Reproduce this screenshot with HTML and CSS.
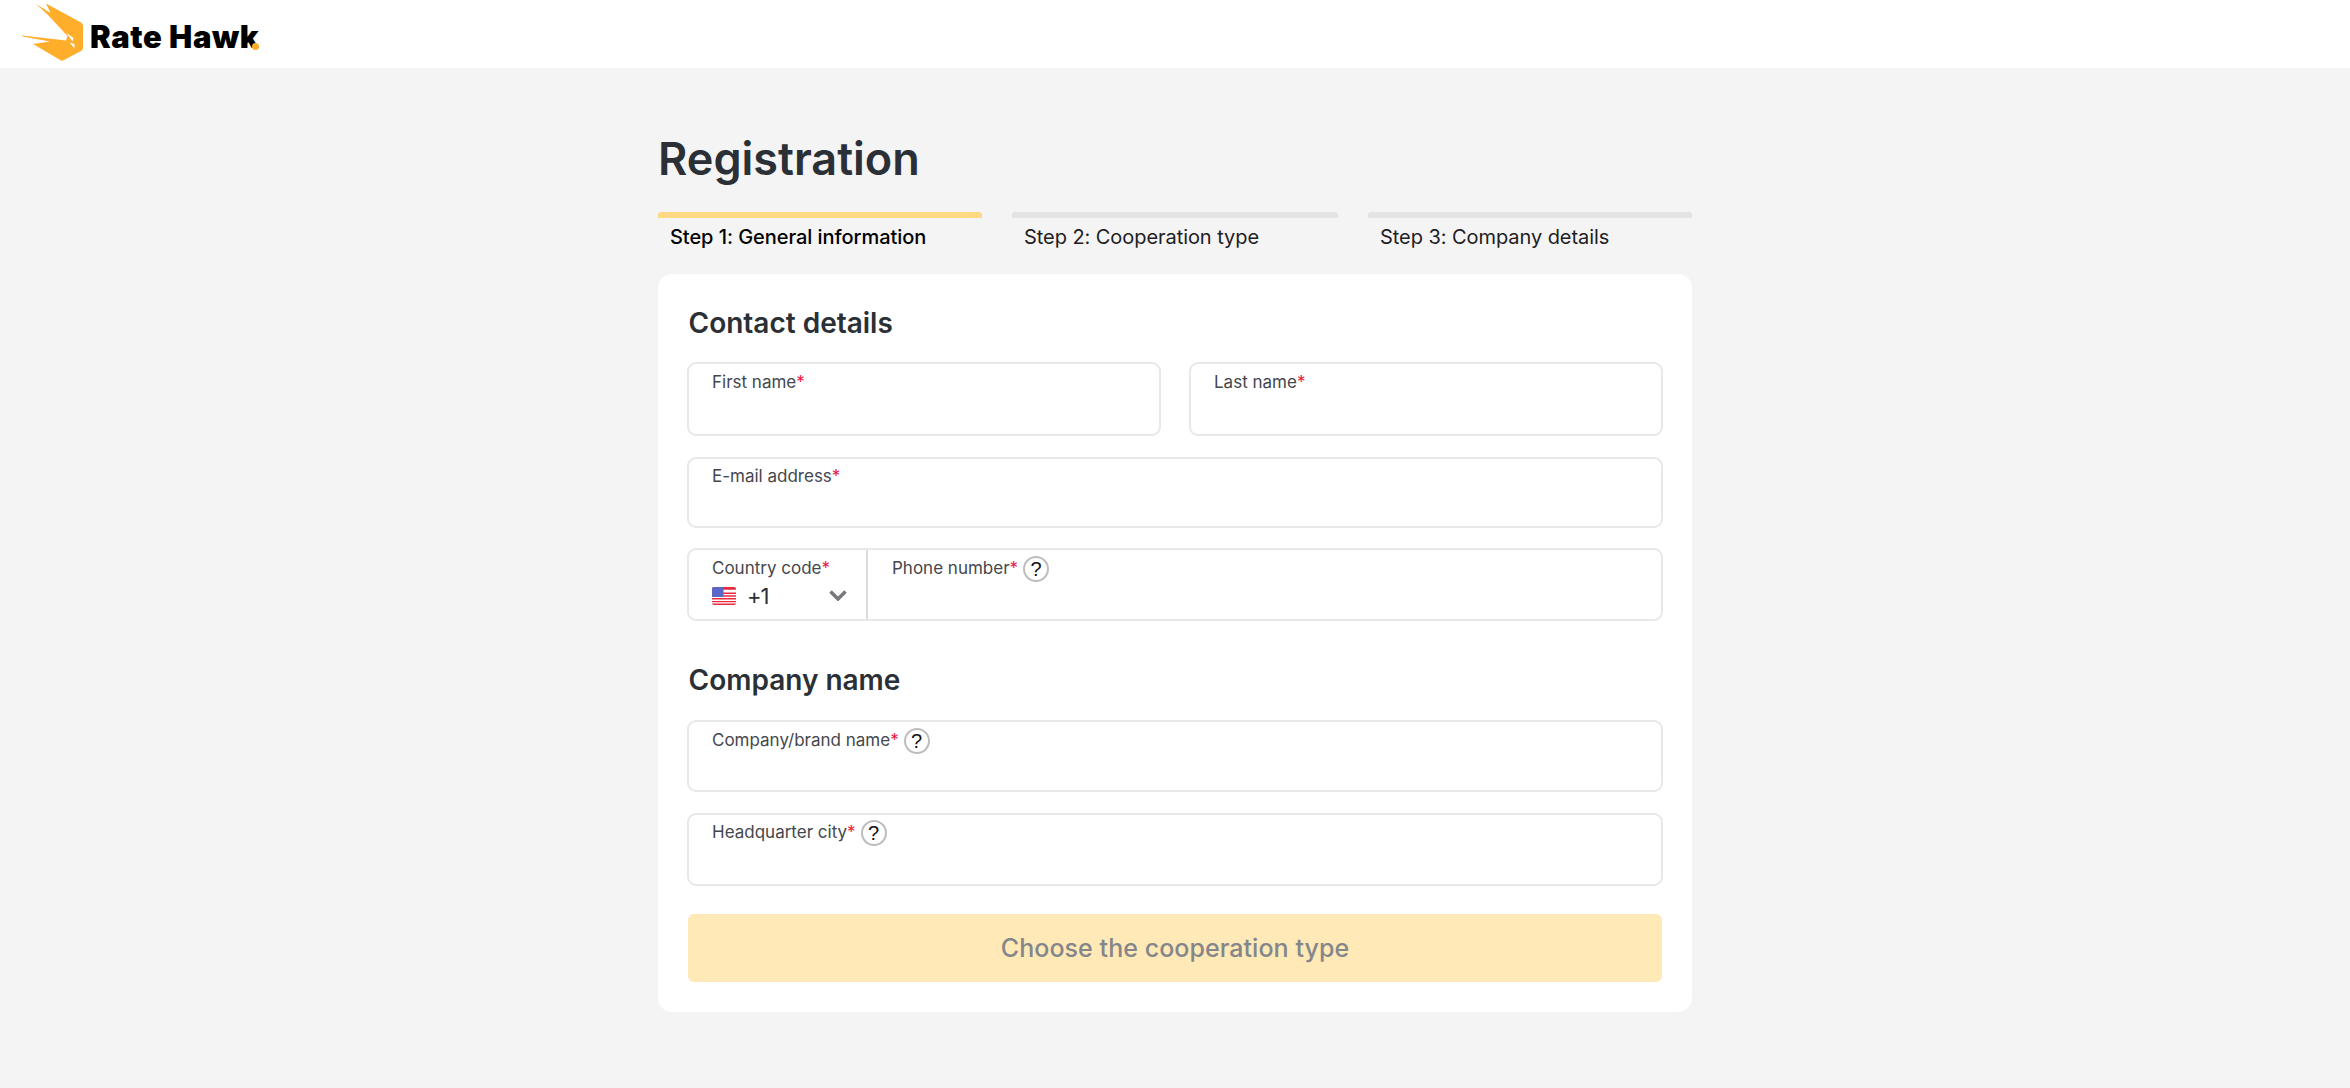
FILE: index.html
```html
<!DOCTYPE html>
<html lang="en">
<head>
<meta charset="utf-8">
<title>Registration</title>
<link rel="stylesheet" href="styles.css">
</head>
<body>
<header class="topbar">
  <a class="logo" href="#">
    <svg class="logo-mark" viewBox="0 0 70 66" width="70" height="66" aria-hidden="true">
      <path fill="#ffae2b" d="M16 4L30.500 13L26 3.500L61 22.500Q63 23.500 63 26V48Q63 50 61 51L43 60.500Q42 61 41 60.500L13 44L30 41.500L2.500 36.500L2.500 35.500L46 40.500L47.500 36L28 15Z"/>
      <path fill="#fff" d="M46.500 33L53.500 38L52.500 41.500ZM49.500 42.500L54.500 44L54.500 48.500Z"/>
    </svg>
    <span class="logo-text">Rate Hawk</span><span class="logo-dot"></span>
  </a>
</header>
<main class="page">
  <h1 class="title">Registration</h1>
  <ol class="steps">
    <li class="step step-active"><span class="step-name">Step 1: General information</span></li>
    <li class="step"><span class="step-name">Step 2: Cooperation type</span></li>
    <li class="step"><span class="step-name">Step 3: Company details</span></li>
  </ol>
  <form class="card">
    <h2 class="section-title">Contact details</h2>
    <div class="row row-two">
      <div class="field field-name"><span class="label">First name<b class="req">*</b></span></div>
      <div class="field field-name"><span class="label">Last name<b class="req">*</b></span></div>
    </div>
    <div class="field field-email"><span class="label">E-mail address<b class="req">*</b></span></div>
    <div class="field phone">
      <div class="code">
        <span class="label">Country code<b class="req">*</b></span>
        <div class="code-value">
          <svg class="flag" viewBox="0 0 24 18" width="24" height="18" aria-hidden="true">
            <rect width="24" height="18" rx="2" fill="#fff"/>
            <path fill="#e8293f" d="M0 2a2 2 0 0 1 2-2h20a2 2 0 0 1 2 2v.8H0zM0 5.500h24v1.400H0zM0 8.300h24v1.400H0zM0 11.100h24v1.400H0zM0 13.900h24v1.400H0zM0 16.600h24a2 2 0 0 1-2 1.400H2a2 2 0 0 1-2-1.400z"/>
            <path fill="#5a67c8" d="M0 2a2 2 0 0 1 2-2h9.500v10H0z"/>
          </svg>
          <span class="code-num">+1</span>
          <svg class="chev" viewBox="0 0 18 11" width="18" height="11" aria-hidden="true"><path d="M1.500 1.500L9 9l7.500-7.500" fill="none" stroke="#77787c" stroke-width="3.500"/></svg>
        </div>
      </div>
      <div class="number"><span class="label">Phone number<b class="req">*</b><i class="help">?</i></span></div>
    </div>
    <h2 class="section-title section-second">Company name</h2>
    <div class="field field-company"><span class="label">Company/brand name<b class="req">*</b><i class="help">?</i></span></div>
    <div class="field field-city"><span class="label">Headquarter city<b class="req">*</b><i class="help">?</i></span></div>
    <button class="submit" type="button" disabled>Choose the cooperation type</button>
  </form>
</main>
</body>
</html>
```
FILE: styles.css
```css
* { box-sizing: border-box; }
html, body { margin: 0; padding: 0; }
body { background: #f4f4f4; font-family: "Inter", "Liberation Sans", sans-serif; color: #2b2f36; height: 1088px; overflow: hidden; }
.topbar { height: 68px; background: #fff; }
.logo { display: flex; align-items: flex-start; height: 66px; padding-left: 20px; color: #000; text-decoration: none; }
.logo-mark { display: block; flex: none; }
.logo-text { font-family: "Inter", sans-serif; font-weight: 900; font-size: 31px; line-height: 36px; margin-top: 19px; letter-spacing: 0.6px; white-space: nowrap; }
.logo-dot { flex: none; width: 7px; height: 7px; border-radius: 50%; background: #ffae2b; margin-top: 43px; margin-left: -7px; }
.page { width: 1034px; margin: 0 auto; }
.title { margin: 0; padding-top: 63px; font-size: 45px; line-height: 56px; font-weight: 600; }
.steps { list-style: none; display: grid; grid-template-columns: 324px 326px 324px; column-gap: 30px; margin: 25px 0 0; padding: 0; height: 62px; }
.step { border-top: 6px solid #e4e4e4; border-radius: 3px 3px 0 0; padding: 6px 0 0 12px; font-size: 20px; line-height: 26px; letter-spacing: -0.06px; color: #1e2024; }
.step-active { border-top-color: #ffd984; color: #000; font-weight: 500; }
.card { background: #fff; border-radius: 14px; padding: 31px 29px 30px; display: flex; flex-direction: column; gap: 20px; }
.section-title { margin: 0 0 1px; padding-left: 1.500px; font-size: 28px; line-height: 36px; font-weight: 600; }
.section-second { margin: 21px 0 2px; }
.row-two { display: grid; grid-template-columns: 474px 474px; column-gap: 28px; margin-bottom: 1px; }
.field { height: 73px; border: 2px solid #e8e8e8; border-radius: 9px; padding: 6px 23px; background: #fff; }
.field-name { height: 74px; }
.field-email { height: 71px; padding-top: 5px; }
.field-company { height: 72px; margin-bottom: 1px; }
.field-city { padding-top: 5px; }
.label { display: flex; align-items: center; height: 24px; font-size: 17px; line-height: 24px; color: #44474d; white-space: nowrap; }
.req { color: #e8173a; font-weight: 400; }
.help { flex: none; width: 26px; height: 26px; border: 2px solid #bdbdbd; border-radius: 50%; margin: 2px 0 0 5px; display: flex; align-items: center; justify-content: center; font-style: normal; font-family: "Liberation Sans", sans-serif; font-size: 20px; color: #111; }
.phone { display: flex; padding: 0; }
.code { width: 179px; flex: none; border-right: 2px solid #dcdcdc; padding: 6px 23px; }
.code-value { display: flex; align-items: center; margin-top: 2px; height: 27px; }
.flag { display: block; flex: none; }
.code-num { margin-left: 11px; margin-top: 1px; font-size: 22px; letter-spacing: -1px; font-weight: 400; color: #2b2f36; }
.chev { margin-left: auto; margin-right: -4px; }
.number { flex: 1; padding: 6px 24px; }
.submit { margin: 8px 1px 0; height: 68px; border: 0; border-radius: 6px; background: #fee9b7; color: #84868a; font-family: inherit; font-size: 25px; font-weight: 500; letter-spacing: 0.05px; }
```
